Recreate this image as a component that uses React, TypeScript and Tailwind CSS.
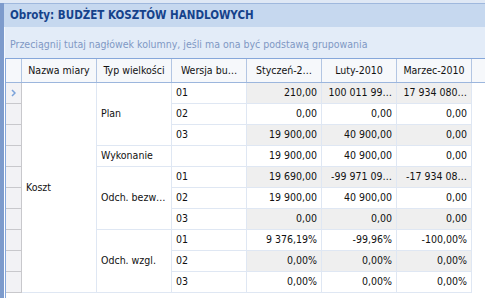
const rows = [
  { w: '01', v: ['210,00', '100 011 99…', '17 934 080…'] },
  { w: '02', v: ['0,00', '0,00', '0,00'] },
  { w: '03', v: ['19 900,00', '40 900,00', '0,00'] },
  { w: '', v: ['19 900,00', '40 900,00', '0,00'] },
  { w: '01', v: ['19 690,00', '-99 971 09…', '-17 934 08…'] },
  { w: '02', v: ['19 900,00', '40 900,00', '0,00'] },
  { w: '03', v: ['0,00', '0,00', '0,00'] },
  { w: '01', v: ['9 376,19%', '-99,96%', '-100,00%'] },
  { w: '02', v: ['0,00%', '0,00%', '0,00%'] },
  { w: '03', v: ['0,00%', '0,00%', '0,00%'] },
];

const typ = [
  { label: 'Plan', cls: 'row-start-1 row-span-3' },
  { label: 'Wykonanie', cls: 'row-start-4 row-span-1' },
  { label: 'Odch. bezw…', cls: 'row-start-5 row-span-3' },
  { label: 'Odch. wzgl.', cls: 'row-start-8 row-span-3' },
];

const rowStart = ['row-start-1', 'row-start-2', 'row-start-3', 'row-start-4', 'row-start-5', 'row-start-6', 'row-start-7', 'row-start-8', 'row-start-9', 'row-start-10'];
const heads = ['Nazwa miary', 'Typ wielkości', 'Wersja bu…', 'Styczeń-2…', 'Luty-2010', 'Marzec-2010'];

export default function App() {
  return (
    <div className="flex h-[298px] w-[485px] flex-col overflow-hidden bg-white font-['DejaVu_Sans_Condensed','Liberation_Sans',sans-serif] text-[10.5px] text-[#111]">
      <div className="h-[3px] bg-[#dfe8f5]" />
      <div className="flex flex-1">
        <div className="w-[4px] bg-[#7d9bcc]" />
        <div className="flex flex-1 flex-col">
          <div className="flex h-[24px] items-center border-t border-[#9fb8dd] bg-[#c6d8ef] pl-[6px] text-[11.5px] font-bold text-[#15428b]">
            Obroty: BUDŻET KOSZTÓW HANDLOWYCH
          </div>
          <div className="h-[31px] border-l border-[#f4f8fd] bg-[#e3ecf8] pl-[5px] pt-[11px] leading-[13px] text-[#7f98c4]">
            Przeciągnij tutaj nagłówek kolumny, jeśli ma ona być podstawą grupowania
          </div>
          <div className="flex flex-1 flex-col border-l border-white">
            <div className="flex flex-1 flex-col border-l border-t border-[#86a7da]">
              <div className="flex h-[24px] border-b border-[#9cb6dd] bg-[#f6f8fb]">
                <div className="w-[16px] border-r border-[#b3c6e3]" />
                {heads.map((h) => (
                  <div key={h} className="flex w-[75px] items-center justify-center border-r border-[#b3c6e3]">{h}</div>
                ))}
              </div>
              <div className="grid grid-cols-[16px_75px_75px_75px_75px_75px_75px] grid-rows-[repeat(10,21px)]">
                {rows.map((r, i) => (
                  <div key={'i' + i} className={`col-start-1 ${rowStart[i]} flex items-center justify-center border-r border-b border-[#c8c8cc] bg-[#f2f2f5]`}>
                    {i === 0 && (
                      <svg width="5" height="8" viewBox="0 0 5 8">
                        <path d="M1 1l3 3-3 3" fill="none" stroke="#7aa2da" strokeWidth="1.5" />
                      </svg>
                    )}
                  </div>
                ))}
                <div className="col-start-2 row-start-1 row-span-10 flex items-center border-r border-b border-[#dfe7f3] pl-[4px]">Koszt</div>
                {typ.map((t) => (
                  <div key={t.label} className={`col-start-3 ${t.cls} flex items-center border-r border-b border-[#dfe7f3] pl-[4px]`}>{t.label}</div>
                ))}
                {rows.map((r, i) => (
                  <div key={'w' + i} className={`col-start-4 ${rowStart[i]} flex items-center border-r border-b border-[#dfe7f3] pl-[4px]`}>{r.w}</div>
                ))}
                {rows.map((r, i) =>
                  r.v.map((v, j) => (
                    <div
                      key={'v' + i + j}
                      className={`${rowStart[i]} flex items-center justify-end whitespace-nowrap border-r border-b border-[#dfe7f3] pr-[4px] ${i % 2 === 0 ? 'bg-[#efefef]' : 'bg-white'}`}
                    >
                      {v}
                    </div>
                  ))
                )}
              </div>
            </div>
          </div>
        </div>
      </div>
    </div>
  );
}
